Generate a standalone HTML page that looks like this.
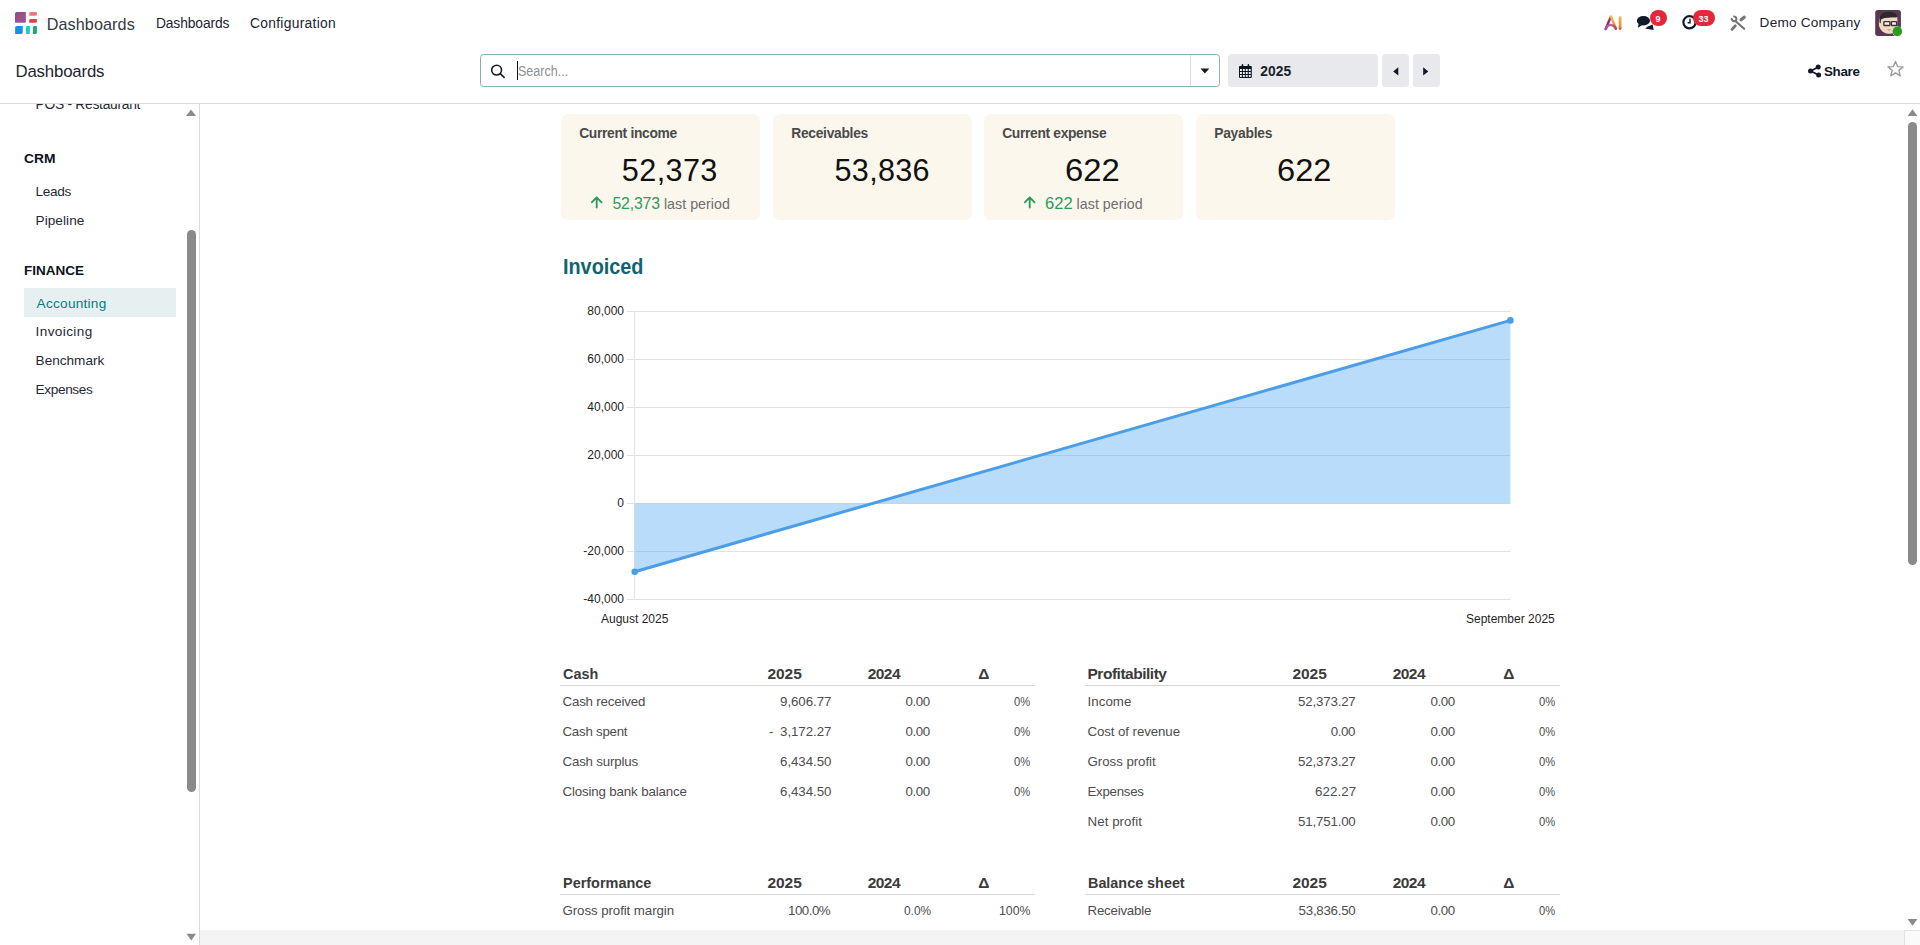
<!DOCTYPE html>
<html><head><meta charset="utf-8">
<style>
*{box-sizing:border-box;margin:0;padding:0}
html,body{width:1920px;height:945px;overflow:hidden;background:#fff;font-family:"Liberation Sans",sans-serif;color:#374151;position:relative}
.abs{position:absolute}
.t{position:absolute;white-space:nowrap;line-height:1}
.card{position:absolute;top:114px;width:199px;height:106px;background:#fcf7ed;border-radius:7px}
.sbtn{position:absolute;top:54px;height:33px;background:#e7e9ed;border-radius:3.5px}
</style></head><body>
<!-- control panel border -->
<div class="abs" style="left:0;top:103px;width:1920px;height:1px;background:#dadada"></div>
<!-- sidebar border -->
<div class="abs" style="left:199px;top:104px;width:1px;height:841px;background:#d8dadd"></div>
<!-- bottom horizontal scrollbar track -->
<div class="abs" style="left:200px;top:930px;width:1720px;height:15px;background:#f4f4f4"></div>
<div class="abs" style="left:1904px;top:930px;width:16px;height:15px;background:#fafafa;border-left:1px solid #e3e3e3;border-top:1px solid #e3e3e3"></div>

<!-- logo -->
<svg class="abs" style="left:15px;top:12px" width="23" height="23" viewBox="0 0 23 23">
  <defs><linearGradient id="gp" x1="0" y1="0" x2="1" y2="1"><stop offset="0" stop-color="#8a4a86"/><stop offset="0.6" stop-color="#a0538a"/><stop offset="1" stop-color="#9a4fa8"/></linearGradient></defs>
  <path d="M0 1.6 Q0 0 1.6 0 L10.9 0 L10.9 9.200000000000001 Q10.9 10.8 9.3 10.8 L0 10.8 Z" fill="url(#gp)"/>
  <path d="M14.2 1.6 Q14.2 0.1 15.7 0.1 L21.9 0.1 L21.9 2.3 Q21.9 3.8 20.4 3.8 L14.2 3.8 Z" fill="#f4737b"/>
  <path d="M14.2 8.6 Q14.2 7.1 15.7 7.1 L21.9 7.1 L21.9 9.3 Q21.9 10.8 20.4 10.8 L14.2 10.8 Z" fill="#e43d4b"/>
  <path d="M0.1 15.6 Q0.1 14 1.7000000000000002 14 L7.8 14 L7.8 20.299999999999997 Q7.8 21.9 6.199999999999999 21.9 L0.1 21.9 Z" fill="#1a8cf5"/>
  <path d="M10.9 15.5 Q10.9 14 12.4 14 L14.9 14 L14.9 20.4 Q14.9 21.9 13.4 21.9 L10.9 21.9 Z" fill="#22ccbb"/>
  <path d="M17.9 15.5 Q17.9 14 19.4 14 L21.9 14 L21.9 20.4 Q21.9 21.9 20.4 21.9 L17.9 21.9 Z" fill="#21a67a"/>
</svg>

<!-- AI icon -->
<svg class="abs" style="left:1603px;top:14px" width="21" height="18" viewBox="0 0 21 18">
  <defs>
    <linearGradient id="gl" gradientUnits="userSpaceOnUse" x1="2" y1="15" x2="8" y2="2"><stop offset="0" stop-color="#a0479a"/><stop offset="0.5" stop-color="#8a2868"/><stop offset="0.85" stop-color="#b8456a"/><stop offset="1" stop-color="#f0b248"/></linearGradient>
    <linearGradient id="gr" gradientUnits="userSpaceOnUse" x1="0" y1="2" x2="0" y2="16"><stop offset="0" stop-color="#f3b846"/><stop offset="0.7" stop-color="#e9953e"/><stop offset="1" stop-color="#c0443e"/></linearGradient>
    <linearGradient id="gb" gradientUnits="userSpaceOnUse" x1="2" y1="0" x2="13" y2="0"><stop offset="0" stop-color="#9f4f9a"/><stop offset="0.6" stop-color="#c06a9a"/><stop offset="1" stop-color="#b9423c"/></linearGradient>
  </defs>
  <path d="M2.7 15 L7.8 2.8" stroke="url(#gl)" stroke-width="2.5" fill="none" stroke-linecap="round"/>
  <path d="M8 2.6 L12.9 14.7" stroke="url(#gr)" stroke-width="2.5" fill="none" stroke-linecap="round"/>
  <path d="M2.6 15 Q4.8 10.6 8.2 11 Q11.2 11.4 12.7 14.5" stroke="url(#gb)" stroke-width="2.3" fill="none" stroke-linecap="round"/>
  <path d="M17.1 3.6 V14.6" stroke="url(#gr)" stroke-width="2.8" stroke-linecap="round"/>
</svg>
<!-- chat icon -->
<svg class="abs" style="left:1636px;top:15px" width="20" height="16" viewBox="0 0 20 16">
  <path d="M9 13.4 L12.5 11.2 L16.6 9.6 L17.7 15 Z" fill="#0f1a2b"/>
  <ellipse cx="7.4" cy="5.75" rx="6.6" ry="4.75" fill="#0f1a2b"/>
  <path d="M2.6 8.5 L1.9 12.7 L6 10.3 Z" fill="#0f1a2b"/>
</svg>
<div class="abs" style="left:1649.8px;top:10.1px;width:16.8px;height:15.8px;border-radius:8px;background:#e2283b"></div>
<!-- clock icon -->
<svg class="abs" style="left:1680px;top:13px" width="18" height="18" viewBox="0 0 18 18">
  <circle cx="9.5" cy="9.3" r="6.1" stroke="#0f1a2b" stroke-width="2.2" fill="none"/>
  <path d="M10 5.8 V9.8 H7.6" stroke="#0f1a2b" stroke-width="1.5" fill="none"/>
</svg>
<div class="abs" style="left:1693.3px;top:10.1px;width:21.4px;height:15.8px;border-radius:8px;background:#e2283b"></div>
<!-- tools icon -->
<svg class="abs" style="left:1728px;top:14px" width="20" height="18" viewBox="0 0 20 18">
  <path d="M5.3 2.7 A2.3 2.3 0 1 1 3.95 4.1" stroke="#767676" stroke-width="2.1" fill="none"/>
  <path d="M7.6 7.2 L16.2 14.8" stroke="#767676" stroke-width="2.2" stroke-linecap="round"/>
  <path d="M13.1 5.8 L16.2 3.2" stroke="#767676" stroke-width="3.2" stroke-linecap="round"/>
  <path d="M7.3 11.7 L4 15.4" stroke="#767676" stroke-width="2.8" stroke-linecap="round"/>
</svg>
<!-- avatar -->
<svg class="abs" style="left:1875px;top:10px" width="28" height="28" viewBox="0 0 28 28">
  <rect x="0.2" y="0" width="25.7" height="25.9" rx="2.6" fill="#5a3853"/>
  <path d="M4.6 8.5 L22.3 7 L22.4 14 Q22 21 17 23.2 Q13 24.6 9 22.6 Q5.2 20.4 4 15.6 Q3.6 11 4.6 8.5 Z" fill="#f5d8c4"/>
  <path d="M4.5 12.5 Q3.9 2 12.5 1.8 Q20.8 1.5 21.8 5.5 L21.6 7.6 Q15 6.3 8.5 8.3 L6 9.5 L5.6 13.5 Z" fill="#2a2a2a"/>
  <rect x="8.9" y="11.6" width="6" height="3.9" rx="0.6" stroke="#3b3434" stroke-width="1.4" fill="#fbf1ea"/>
  <rect x="16.4" y="11.6" width="5.2" height="3.9" rx="0.6" stroke="#3b3434" stroke-width="1.4" fill="#fbf1ea"/>
  <path d="M12.5 19.6 Q14 20.6 15.5 19.6" stroke="#b77b62" stroke-width="0.9" fill="none"/>
  <circle cx="22.3" cy="21.4" r="5.2" fill="#f2f7d8"/>
  <circle cx="22.3" cy="21.4" r="4.8" fill="#2b9a21"/>
</svg>

<!-- search box -->
<div class="abs" style="left:480px;top:54px;width:740px;height:33px;border:1px solid #85b3aa;border-radius:3.5px;background:#fff"></div>
<div class="abs" style="left:1190px;top:55px;width:1px;height:31px;background:#d9dadc"></div>
<svg class="abs" style="left:490px;top:64px" width="16" height="15" viewBox="0 0 16 15">
  <circle cx="6.6" cy="6.1" r="4.9" stroke="#1b1f27" stroke-width="1.6" fill="none"/>
  <path d="M10.2 9.7 L14.1 13.4" stroke="#1b1f27" stroke-width="1.7" stroke-linecap="round"/>
</svg>
<div class="abs" style="left:517px;top:61px;width:1px;height:19px;background:#111"></div>
<svg class="abs" style="left:1200px;top:68px" width="10" height="6" viewBox="0 0 10 6"><path d="M0.5 0.5 H9.3 L4.9 5.5Z" fill="#111827"/></svg>
<!-- date buttons -->
<div class="sbtn" style="left:1228px;width:150px"></div>
<div class="sbtn" style="left:1382px;width:27px"></div>
<div class="sbtn" style="left:1413px;width:27px"></div>
<svg class="abs" style="left:1239px;top:64px" width="14" height="15" viewBox="0 0 14 15">
  <rect x="0" y="2" width="12.8" height="11.9" rx="0.8" fill="#0c1322"/>
  <rect x="2.7" y="0" width="1.6" height="3.6" rx="0.8" fill="#0c1322"/><rect x="8.6" y="0" width="1.6" height="3.6" rx="0.8" fill="#0c1322"/>
  <g fill="#f3f4f6"><rect x="1" y="5" width="1.9" height="2"/><rect x="3.9" y="5" width="1.9" height="2"/><rect x="6.8" y="5" width="1.9" height="2"/><rect x="9.8" y="5" width="1.9" height="2"/>
  <rect x="1" y="8" width="1.9" height="2"/><rect x="3.9" y="8" width="1.9" height="2"/><rect x="6.8" y="8" width="1.9" height="2"/><rect x="9.8" y="8" width="1.9" height="2"/>
  <rect x="1" y="11" width="1.9" height="1.9"/><rect x="3.9" y="11" width="1.9" height="1.9"/><rect x="6.8" y="11" width="1.9" height="1.9"/><rect x="9.8" y="11" width="1.9" height="1.9"/></g>
</svg>
<svg class="abs" style="left:1393px;top:67px" width="6" height="9" viewBox="0 0 6 9"><path d="M5.3 0.2 V8.6 L0.2 4.4Z" fill="#111827"/></svg>
<svg class="abs" style="left:1423px;top:67px" width="6" height="9" viewBox="0 0 6 9"><path d="M0.2 0.2 V8.6 L5.3 4.4Z" fill="#111827"/></svg>
<!-- share icon -->
<svg class="abs" style="left:1807px;top:63px" width="15" height="16" viewBox="0 0 15 16">
  <path d="M11.3 4 L3.8 8 L11.5 12" stroke="#111827" stroke-width="1.8" fill="none"/>
  <circle cx="11.2" cy="4" r="2.5" fill="#111827"/><circle cx="3.5" cy="8" r="2.5" fill="#111827"/><circle cx="11.6" cy="11.9" r="2.5" fill="#111827"/>
</svg>
<!-- star -->
<svg class="abs" style="left:1886px;top:60px" width="19" height="18" viewBox="0 0 19 18">
  <path d="M9.5 1.6 L11.6 6.6 L17 6.9 L12.8 10.4 L14.2 15.8 L9.5 12.8 L4.8 15.8 L6.2 10.4 L2 6.9 L7.4 6.6Z" stroke="#9c9c9c" stroke-width="1.4" fill="none" stroke-linejoin="round"/>
</svg>

<!-- sidebar scrollbar -->
<div class="abs" style="left:24px;top:288px;width:152px;height:29px;background:#e6f0f1"></div>
<svg class="abs" style="left:185px;top:108px" width="12" height="9" viewBox="0 0 12 9"><path d="M1 8 H11 L6 1.5Z" fill="#8a8a8a"/></svg>
<div class="abs" style="left:187px;top:230px;width:9px;height:562px;border-radius:4.5px;background:#8a8a8a"></div>
<svg class="abs" style="left:186px;top:933px" width="11" height="8" viewBox="0 0 11 8"><path d="M0.5 0.8 H10 L5.3 7.5Z" fill="#8a8a8a"/></svg>
<!-- main scrollbar -->
<svg class="abs" style="left:1907px;top:108px" width="11" height="9" viewBox="0 0 11 9"><path d="M0.6 8 H10.4 L5.5 1.3Z" fill="#8a8a8a"/></svg>
<div class="abs" style="left:1908px;top:122px;width:9px;height:443px;border-radius:4.5px;background:#8a8a8a"></div>
<svg class="abs" style="left:1907px;top:918px" width="11" height="9" viewBox="0 0 11 9"><path d="M0.6 1 H10.4 L5.5 7.8Z" fill="#8a8a8a"/></svg>

<div class="card" style="left:561px"></div>
<svg class="abs" style="left:589.8px;top:195.5px" width="14" height="13" viewBox="0 0 14 13"><path d="M6.7 11.6V1.8 M1.8 6.3L6.7 1.4L11.6 6.3" stroke="#2e9b5e" stroke-width="1.9" fill="none" stroke-linecap="round" stroke-linejoin="round"/></svg>
<div class="card" style="left:773px"></div>
<div class="card" style="left:984px"></div>
<svg class="abs" style="left:1023.3px;top:195.5px" width="14" height="13" viewBox="0 0 14 13"><path d="M6.7 11.6V1.8 M1.8 6.3L6.7 1.4L11.6 6.3" stroke="#2e9b5e" stroke-width="1.9" fill="none" stroke-linecap="round" stroke-linejoin="round"/></svg>
<div class="card" style="left:1196px"></div>
<div class="abs" style="left:560px;top:685px;width:475px;height:1px;background:#d6d6d6"></div>
<div class="abs" style="left:1085px;top:685px;width:475px;height:1px;background:#d6d6d6"></div>
<div class="abs" style="left:560px;top:894px;width:475px;height:1px;background:#d6d6d6"></div>
<div class="abs" style="left:1085px;top:894px;width:475px;height:1px;background:#d6d6d6"></div>

<!-- chart -->
<svg class="abs" style="left:0;top:0;pointer-events:none" width="1920" height="945" viewBox="0 0 1920 945">
  <g stroke="#e2e2e2" stroke-width="1">
    <path d="M627 311.5 H1510.5 M627 359.5 H1510.5 M627 407.5 H1510.5 M627 455.5 H1510.5 M627 503.5 H1510.5 M627 551.5 H1510.5 M627 599.5 H1510.5"/>
    <path d="M634.5 311 V599.5"/>
  </g>
  <path d="M634.7 503.5 L634.7 571.7 L1510.4 320.4 L1510.4 503.5Z" fill="#4ea7f2" fill-opacity="0.4"/>
  <path d="M634.7 571.7 L1510.4 320.4" stroke="#4a9ee8" stroke-width="3" fill="none"/>
  <circle cx="634.7" cy="571.7" r="3.3" fill="#4a9ee8"/>
  <circle cx="1510.4" cy="320.4" r="3.3" fill="#4a9ee8"/>
</svg>

<div class="abs" style="left:0;top:104px;width:199px;height:841px;overflow:hidden"><div class="t" style="left:35.60px;top:-5.98px;font-size:13.8px;color:#1f2937;letter-spacing:-0.273px;">POS - Restaurant</div>
<div class="t" style="left:24.30px;top:48.37px;font-size:13.5px;color:#0b1220;font-weight:700;transform:scaleX(1.0233);transform-origin:0 0;">CRM</div>
<div class="t" style="left:35.50px;top:81.09px;font-size:13.6px;color:#1f2937;letter-spacing:-0.325px;">Leads</div>
<div class="t" style="left:35.50px;top:110.19px;font-size:13.6px;color:#1f2937;letter-spacing:0.071px;">Pipeline</div>
<div class="t" style="left:23.90px;top:159.57px;font-size:13.5px;color:#0b1220;font-weight:700;letter-spacing:0.017px;">FINANCE</div>
<div class="t" style="left:36.60px;top:192.59px;font-size:13.6px;color:#017e84;letter-spacing:0.267px;">Accounting</div>
<div class="t" style="left:35.60px;top:221.29px;font-size:13.6px;color:#1f2937;letter-spacing:0.375px;">Invoicing</div>
<div class="t" style="left:35.60px;top:250.19px;font-size:13.6px;color:#1f2937;letter-spacing:-0.012px;">Benchmark</div>
<div class="t" style="left:35.60px;top:279.39px;font-size:13.6px;color:#1f2937;letter-spacing:-0.357px;">Expenses</div></div>
<div class="t" style="left:46.70px;top:16.09px;font-size:16.2px;color:#333a44;letter-spacing:0.089px;">Dashboards</div>
<div class="t" style="left:155.90px;top:16.52px;font-size:13.8px;color:#1b2431;letter-spacing:-0.089px;">Dashboards</div>
<div class="t" style="left:250.00px;top:16.52px;font-size:13.8px;color:#1b2431;letter-spacing:0.300px;">Configuration</div>
<div class="t" style="left:1759.60px;top:16.39px;font-size:13.6px;color:#1b2431;letter-spacing:0.218px;">Demo Company</div>
<div class="t" style="left:15.50px;top:63.58px;font-size:16.8px;color:#1b2431;letter-spacing:-0.167px;">Dashboards</div>
<div class="t" style="left:517.61px;top:63.95px;font-size:14px;color:#8c8f94;transform:scaleX(0.8944);transform-origin:0 0;">Search...</div>
<div class="t" style="left:1260.30px;top:64.92px;font-size:13.8px;color:#1a1f2b;font-weight:700;letter-spacing:0.067px;">2025</div>
<div class="t" style="left:1823.90px;top:64.76px;font-size:13.4px;color:#111827;font-weight:700;letter-spacing:-0.300px;">Share</div>
<div class="t" style="left:579.20px;top:127.22px;font-size:13.8px;color:#4a4a4a;font-weight:700;letter-spacing:-0.308px;">Current income</div>
<div class="t" style="left:621.80px;top:155.20px;font-size:30.6px;color:#111111;letter-spacing:0.400px;">52,373</div>
<div class="t" style="left:612.40px;top:195.53px;font-size:15.8px;color:#2e9b5e;letter-spacing:-0.140px;">52,373</div>
<div class="t" style="left:663.90px;top:196.88px;font-size:14.2px;color:#6e6e6e;letter-spacing:0.050px;">last period</div>
<div class="t" style="left:791.20px;top:127.22px;font-size:13.8px;color:#4a4a4a;font-weight:700;letter-spacing:-0.270px;">Receivables</div>
<div class="t" style="left:834.50px;top:155.20px;font-size:30.6px;color:#111111;letter-spacing:0.300px;">53,836</div>
<div class="t" style="left:1002.20px;top:127.22px;font-size:13.8px;color:#4a4a4a;font-weight:700;letter-spacing:-0.321px;">Current expense</div>
<div class="t" style="left:1064.63px;top:155.20px;font-size:30.6px;color:#111111;transform:scaleX(1.0735);transform-origin:0 0;">622</div>
<div class="t" style="left:1045.15px;top:195.53px;font-size:15.8px;color:#2e9b5e;transform:scaleX(1.0480);transform-origin:0 0;">622</div>
<div class="t" style="left:1076.60px;top:196.88px;font-size:14.2px;color:#6e6e6e;letter-spacing:0.050px;">last period</div>
<div class="t" style="left:1214.20px;top:127.22px;font-size:13.8px;color:#4a4a4a;font-weight:700;letter-spacing:-0.229px;">Payables</div>
<div class="t" style="left:1276.73px;top:155.20px;font-size:30.6px;color:#111111;transform:scaleX(1.0653);transform-origin:0 0;">622</div>
<div class="t" style="left:563.40px;top:256.18px;font-size:22px;color:#0f6571;font-weight:700;transform:scaleX(0.9011);transform-origin:0 0;">Invoiced</div>
<div class="t" style="left:587.30px;top:305.04px;font-size:12px;color:#1f1f1f;">80,000</div>
<div class="t" style="left:587.30px;top:353.04px;font-size:12px;color:#1f1f1f;">60,000</div>
<div class="t" style="left:587.30px;top:401.04px;font-size:12px;color:#1f1f1f;">40,000</div>
<div class="t" style="left:587.30px;top:449.04px;font-size:12px;color:#1f1f1f;">20,000</div>
<div class="t" style="left:617.30px;top:497.04px;font-size:12px;color:#1f1f1f;">0</div>
<div class="t" style="left:583.30px;top:545.04px;font-size:12px;color:#1f1f1f;">-20,000</div>
<div class="t" style="left:583.30px;top:593.04px;font-size:12px;color:#1f1f1f;">-40,000</div>
<div class="t" style="left:601.00px;top:612.74px;font-size:12px;color:#1f1f1f;">August 2025</div>
<div class="t" style="left:1466.00px;top:612.74px;font-size:12px;color:#1f1f1f;">September 2025</div>
<div class="t" style="left:562.57px;top:666.28px;font-size:15.5px;color:#3b3b3b;font-weight:700;transform:scaleX(0.9278);transform-origin:0 0;">Cash</div>
<div class="t" style="left:767.50px;top:666.28px;font-size:15.5px;color:#3b3b3b;font-weight:700;letter-spacing:-0.067px;">2025</div>
<div class="t" style="left:867.70px;top:666.28px;font-size:15.5px;color:#3b3b3b;font-weight:700;letter-spacing:-0.533px;">2024</div>
<div class="t" style="left:978.20px;top:666.28px;font-size:15.5px;color:#3b3b3b;font-weight:700;">Δ</div>
<div class="t" style="left:562.50px;top:695.04px;font-size:13.3px;color:#4d4d4d;letter-spacing:-0.183px;">Cash received</div>
<div class="t" style="left:780.10px;top:695.04px;font-size:13.3px;color:#4d4d4d;letter-spacing:-0.071px;">9,606.77</div>
<div class="t" style="left:905.40px;top:695.04px;font-size:13.3px;color:#4d4d4d;letter-spacing:-0.367px;">0.00</div>
<div class="t" style="left:1014.40px;top:695.04px;font-size:13.3px;color:#4d4d4d;transform:scaleX(0.8421);transform-origin:0 0;">0%</div>
<div class="t" style="left:562.50px;top:725.04px;font-size:13.3px;color:#4d4d4d;letter-spacing:-0.244px;">Cash spent</div>
<div class="t" style="left:780.10px;top:725.04px;font-size:13.3px;color:#4d4d4d;letter-spacing:-0.071px;">3,172.27</div>
<div class="t" style="left:905.40px;top:725.04px;font-size:13.3px;color:#4d4d4d;letter-spacing:-0.367px;">0.00</div>
<div class="t" style="left:1014.40px;top:725.04px;font-size:13.3px;color:#4d4d4d;transform:scaleX(0.8421);transform-origin:0 0;">0%</div>
<div class="t" style="left:562.50px;top:755.04px;font-size:13.3px;color:#4d4d4d;letter-spacing:-0.182px;">Cash surplus</div>
<div class="t" style="left:780.10px;top:755.04px;font-size:13.3px;color:#4d4d4d;letter-spacing:-0.071px;">6,434.50</div>
<div class="t" style="left:905.40px;top:755.04px;font-size:13.3px;color:#4d4d4d;letter-spacing:-0.367px;">0.00</div>
<div class="t" style="left:1014.40px;top:755.04px;font-size:13.3px;color:#4d4d4d;transform:scaleX(0.8421);transform-origin:0 0;">0%</div>
<div class="t" style="left:562.50px;top:785.04px;font-size:13.3px;color:#4d4d4d;letter-spacing:-0.147px;">Closing bank balance</div>
<div class="t" style="left:780.10px;top:785.04px;font-size:13.3px;color:#4d4d4d;letter-spacing:-0.071px;">6,434.50</div>
<div class="t" style="left:905.40px;top:785.04px;font-size:13.3px;color:#4d4d4d;letter-spacing:-0.367px;">0.00</div>
<div class="t" style="left:1014.40px;top:785.04px;font-size:13.3px;color:#4d4d4d;transform:scaleX(0.8421);transform-origin:0 0;">0%</div>
<div class="t" style="left:769.00px;top:725.24px;font-size:13.3px;color:#4d4d4d;">-</div>
<div class="t" style="left:1087.50px;top:666.28px;font-size:15.5px;color:#3b3b3b;font-weight:700;letter-spacing:-0.483px;">Profitability</div>
<div class="t" style="left:1292.50px;top:666.28px;font-size:15.5px;color:#3b3b3b;font-weight:700;letter-spacing:-0.067px;">2025</div>
<div class="t" style="left:1392.70px;top:666.28px;font-size:15.5px;color:#3b3b3b;font-weight:700;letter-spacing:-0.533px;">2024</div>
<div class="t" style="left:1503.20px;top:666.28px;font-size:15.5px;color:#3b3b3b;font-weight:700;">Δ</div>
<div class="t" style="left:1087.50px;top:695.04px;font-size:13.3px;color:#4d4d4d;letter-spacing:0.060px;">Income</div>
<div class="t" style="left:1298.10px;top:695.04px;font-size:13.3px;color:#4d4d4d;letter-spacing:-0.188px;">52,373.27</div>
<div class="t" style="left:1430.40px;top:695.04px;font-size:13.3px;color:#4d4d4d;letter-spacing:-0.367px;">0.00</div>
<div class="t" style="left:1539.40px;top:695.04px;font-size:13.3px;color:#4d4d4d;transform:scaleX(0.8421);transform-origin:0 0;">0%</div>
<div class="t" style="left:1087.50px;top:725.04px;font-size:13.3px;color:#4d4d4d;letter-spacing:-0.093px;">Cost of revenue</div>
<div class="t" style="left:1330.70px;top:725.04px;font-size:13.3px;color:#4d4d4d;letter-spacing:-0.367px;">0.00</div>
<div class="t" style="left:1430.40px;top:725.04px;font-size:13.3px;color:#4d4d4d;letter-spacing:-0.367px;">0.00</div>
<div class="t" style="left:1539.40px;top:725.04px;font-size:13.3px;color:#4d4d4d;transform:scaleX(0.8421);transform-origin:0 0;">0%</div>
<div class="t" style="left:1087.50px;top:755.04px;font-size:13.3px;color:#4d4d4d;letter-spacing:-0.045px;">Gross profit</div>
<div class="t" style="left:1298.10px;top:755.04px;font-size:13.3px;color:#4d4d4d;letter-spacing:-0.188px;">52,373.27</div>
<div class="t" style="left:1430.40px;top:755.04px;font-size:13.3px;color:#4d4d4d;letter-spacing:-0.367px;">0.00</div>
<div class="t" style="left:1539.40px;top:755.04px;font-size:13.3px;color:#4d4d4d;transform:scaleX(0.8421);transform-origin:0 0;">0%</div>
<div class="t" style="left:1087.50px;top:785.04px;font-size:13.3px;color:#4d4d4d;letter-spacing:-0.286px;">Expenses</div>
<div class="t" style="left:1315.00px;top:785.04px;font-size:13.3px;color:#4d4d4d;letter-spacing:0.120px;">622.27</div>
<div class="t" style="left:1430.40px;top:785.04px;font-size:13.3px;color:#4d4d4d;letter-spacing:-0.367px;">0.00</div>
<div class="t" style="left:1539.40px;top:785.04px;font-size:13.3px;color:#4d4d4d;transform:scaleX(0.8421);transform-origin:0 0;">0%</div>
<div class="t" style="left:1087.50px;top:815.04px;font-size:13.3px;color:#4d4d4d;letter-spacing:0.067px;">Net profit</div>
<div class="t" style="left:1298.10px;top:815.04px;font-size:13.3px;color:#4d4d4d;letter-spacing:-0.188px;">51,751.00</div>
<div class="t" style="left:1430.40px;top:815.04px;font-size:13.3px;color:#4d4d4d;letter-spacing:-0.367px;">0.00</div>
<div class="t" style="left:1539.40px;top:815.04px;font-size:13.3px;color:#4d4d4d;transform:scaleX(0.8421);transform-origin:0 0;">0%</div>
<div class="t" style="left:562.57px;top:874.98px;font-size:15.5px;color:#3b3b3b;font-weight:700;transform:scaleX(0.9319);transform-origin:0 0;">Performance</div>
<div class="t" style="left:767.50px;top:874.98px;font-size:15.5px;color:#3b3b3b;font-weight:700;letter-spacing:-0.067px;">2025</div>
<div class="t" style="left:867.70px;top:874.98px;font-size:15.5px;color:#3b3b3b;font-weight:700;letter-spacing:-0.533px;">2024</div>
<div class="t" style="left:978.20px;top:874.98px;font-size:15.5px;color:#3b3b3b;font-weight:700;">Δ</div>
<div class="t" style="left:562.50px;top:903.74px;font-size:13.3px;color:#4d4d4d;letter-spacing:-0.083px;">Gross profit margin</div>
<div class="t" style="left:788.00px;top:903.74px;font-size:13.3px;color:#4d4d4d;letter-spacing:-0.480px;">100.0%</div>
<div class="t" style="left:903.50px;top:903.74px;font-size:13.3px;color:#4d4d4d;transform:scaleX(0.8933);transform-origin:0 0;">0.0%</div>
<div class="t" style="left:998.87px;top:903.74px;font-size:13.3px;color:#4d4d4d;transform:scaleX(0.9273);transform-origin:0 0;">100%</div>
<div class="t" style="left:1087.57px;top:874.98px;font-size:15.5px;color:#3b3b3b;font-weight:700;transform:scaleX(0.9272);transform-origin:0 0;">Balance sheet</div>
<div class="t" style="left:1292.50px;top:874.98px;font-size:15.5px;color:#3b3b3b;font-weight:700;letter-spacing:-0.067px;">2025</div>
<div class="t" style="left:1392.70px;top:874.98px;font-size:15.5px;color:#3b3b3b;font-weight:700;letter-spacing:-0.533px;">2024</div>
<div class="t" style="left:1503.20px;top:874.98px;font-size:15.5px;color:#3b3b3b;font-weight:700;">Δ</div>
<div class="t" style="left:1087.50px;top:903.74px;font-size:13.3px;color:#4d4d4d;letter-spacing:-0.222px;">Receivable</div>
<div class="t" style="left:1298.60px;top:903.74px;font-size:13.3px;color:#4d4d4d;letter-spacing:-0.250px;">53,836.50</div>
<div class="t" style="left:1430.40px;top:903.74px;font-size:13.3px;color:#4d4d4d;letter-spacing:-0.367px;">0.00</div>
<div class="t" style="left:1539.40px;top:903.74px;font-size:13.3px;color:#4d4d4d;transform:scaleX(0.8421);transform-origin:0 0;">0%</div>
<div class="t" style="left:1655.5px;top:14.8px;font-size:9px;font-weight:700;color:#fff">9</div>
<div class="t" style="left:1698.4px;top:14.8px;font-size:9px;font-weight:700;color:#fff;letter-spacing:0.1px">33</div>

</body></html>
